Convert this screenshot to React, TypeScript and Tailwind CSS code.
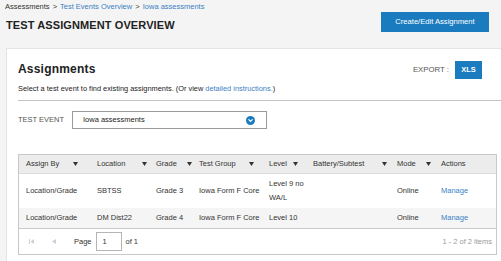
import { ChevronDown } from 'lucide-react';

const font = { fontFamily: '"Liberation Sans", Arial, sans-serif' };

interface Column {
  label: string;
  width: string;
  labelWidth?: string;
}

// label widths push the sort arrow to where it sits in the original grid
const columns: Column[] = [
  { label: 'Assign By', width: 'w-[71px]', labelWidth: 'w-[47px]' },
  { label: 'Location', width: 'w-[59px]', labelWidth: 'w-[45px]' },
  { label: 'Grade', width: 'w-[43px]', labelWidth: 'w-[33px]' },
  { label: 'Test Group', width: 'w-[70px]', labelWidth: 'w-[50px]' },
  { label: 'Level', width: 'w-[44px]', labelWidth: 'w-[24px]' },
  { label: 'Battery/Subtest', width: 'w-[84px]', labelWidth: 'w-[69px]' },
  { label: 'Mode', width: 'w-[44px]', labelWidth: 'w-[29px]' },
  { label: 'Actions', width: 'w-[62px]' },
];

interface Row {
  assignBy: string;
  location: string;
  grade: string;
  testGroup: string;
  level: string[];
  battery: string;
  mode: string;
}

const rows: Row[] = [
  { assignBy: 'Location/Grade', location: 'SBTSS', grade: 'Grade 3', testGroup: 'Iowa Form F Core', level: ['Level 9 no', 'WA/L'], battery: '', mode: 'Online' },
  { assignBy: 'Location/Grade', location: 'DM Dist22', grade: 'Grade 4', testGroup: 'Iowa Form F Core', level: ['Level 10'], battery: '', mode: 'Online' },
];

function SortArrow() {
  return (
    <svg width="5" height="4" viewBox="0 0 5 4" className="shrink-0">
      <path d="M0 0 H5 L2.5 4 Z" fill="#333" />
    </svg>
  );
}

function Cell({ width, children }: { width: string; children?: React.ReactNode }) {
  return <div className={`${width} shrink-0 pl-[7px] whitespace-nowrap overflow-hidden`}>{children}</div>;
}

export default function App() {
  return (
    <div className="h-[261px] w-[501px] overflow-hidden bg-[#f4f4f4] text-[#333]" style={font}>
      {/* page header */}
      <div className="flex h-[48px] justify-between pl-[5px] pr-[12px]">
        <div>
          <div className="pt-[2px] text-[7.5px] leading-[10px]">
            Assessments <span className="mx-[1px]">&gt;</span>{' '}
            <span className="text-[#3b7fc4]">Test Events Overview</span> <span className="mx-[1px]">&gt;</span>{' '}
            <span className="text-[#3b7fc4]">Iowa assessments</span>
          </div>
          <div className="mt-[6px] pl-[1px] text-[11px] font-bold leading-[14px] tracking-[0.1px] text-[#222]">
            TEST ASSIGNMENT OVERVIEW
          </div>
        </div>
        <button className="mt-[12px] h-[20px] w-[108px] bg-[#1a7bbf] text-[7.6px] text-white">Create/Edit Assignment</button>
      </div>

      {/* card */}
      <div className="ml-[6px] h-[260px] w-[512px] border border-[#e4e4e4] bg-white pl-[11px] pr-[12px]">
        <div className="flex h-[30px] items-end justify-between pr-[23px]">
          <div className="pb-[3px] text-[12px] font-bold leading-[14px] tracking-[0.2px] text-[#222]">Assignments</div>
          <div className="flex items-center">
            <span className="mr-[6px] text-[7.8px] text-[#555]">EXPORT :</span>
            <button className="h-[18px] w-[27px] bg-[#1a7bbf] text-[7.5px] font-bold text-white">XLS</button>
          </div>
        </div>

        <div className="mt-[5px] text-[7.4px] leading-[10px] text-[#222]">
          Select a test event to find existing assignments. (Or view{' '}
          <span className="text-[#3b7fc4]">detailed instructions.</span>)
        </div>

        <div className="mt-[6px] border-t border-[#c4c4c4]" />

        <div className="mt-[10px] flex items-center">
          <span className="w-[54px] text-[7.5px] text-[#555]">TEST EVENT</span>
          <div className="flex h-[18px] w-[195px] items-center justify-between border border-[#9a9a9a] pl-[10px] pr-[11px]">
            <span className="text-[7.5px] text-[#222]">Iowa assessments</span>
            <span className="flex h-[9px] w-[9px] items-center justify-center rounded-full bg-[#1a7bbf]">
              <ChevronDown size={7} strokeWidth={4} color="#fff" />
            </span>
          </div>
        </div>

        {/* grid */}
        <div className="mt-[25px] w-[479px] border border-[#c8c8c8] text-[7.5px]">
          <div className="flex h-[19px] items-center border-b border-[#dcdcdc] bg-[#ececec] text-[#333]">
            {columns.map((c) => (
              <Cell key={c.label} width={c.width}>
                <div className="flex items-center">
                  <span className={c.labelWidth}>{c.label}</span>
                  {c.labelWidth && <SortArrow />}
                </div>
              </Cell>
            ))}
          </div>

          {rows.map((r, i) => (
            <div
              key={i}
              className={`flex items-center leading-[14px] ${i === 0 ? 'h-[34px] bg-white' : 'h-[20px] bg-[#f5f5f5]'}`}
            >
              <Cell width={columns[0].width}>{r.assignBy}</Cell>
              <Cell width={columns[1].width}>{r.location}</Cell>
              <Cell width={columns[2].width}>{r.grade}</Cell>
              <Cell width={columns[3].width}>{r.testGroup}</Cell>
              <Cell width={columns[4].width}>
                {r.level.map((l) => (
                  <div key={l}>{l}</div>
                ))}
              </Cell>
              <Cell width={columns[5].width}>{r.battery}</Cell>
              <Cell width={columns[6].width}>{r.mode}</Cell>
              <Cell width={columns[7].width}>
                <span className="text-[#3b7fc4]">Manage</span>
              </Cell>
            </div>
          ))}

          <div className="flex h-[26px] items-center border-t border-[#c8c8c8] pl-[10px] pr-[4px]">
            <svg width="5" height="5" viewBox="0 0 5 5" className="mr-[18px]">
              <rect x="0" y="0" width="1" height="5" fill="#c9d0da" />
              <path d="M5 0 V5 L1.5 2.5 Z" fill="#c9d0da" />
            </svg>
            <svg width="4" height="5" viewBox="0 0 4 5" className="mr-[18px]">
              <path d="M4 0 V5 L0 2.5 Z" fill="#c9d0da" />
            </svg>
            <span className="mr-[4px]">Page</span>
            <div className="flex h-[19px] w-[26px] items-center border border-[#b5b5b5] pl-[6px]">1</div>
            <span className="ml-[4px]">of 1</span>
            <span className="ml-auto text-[#999]">1 - 2 of 2 items</span>
          </div>
        </div>
      </div>
    </div>
  );
}
